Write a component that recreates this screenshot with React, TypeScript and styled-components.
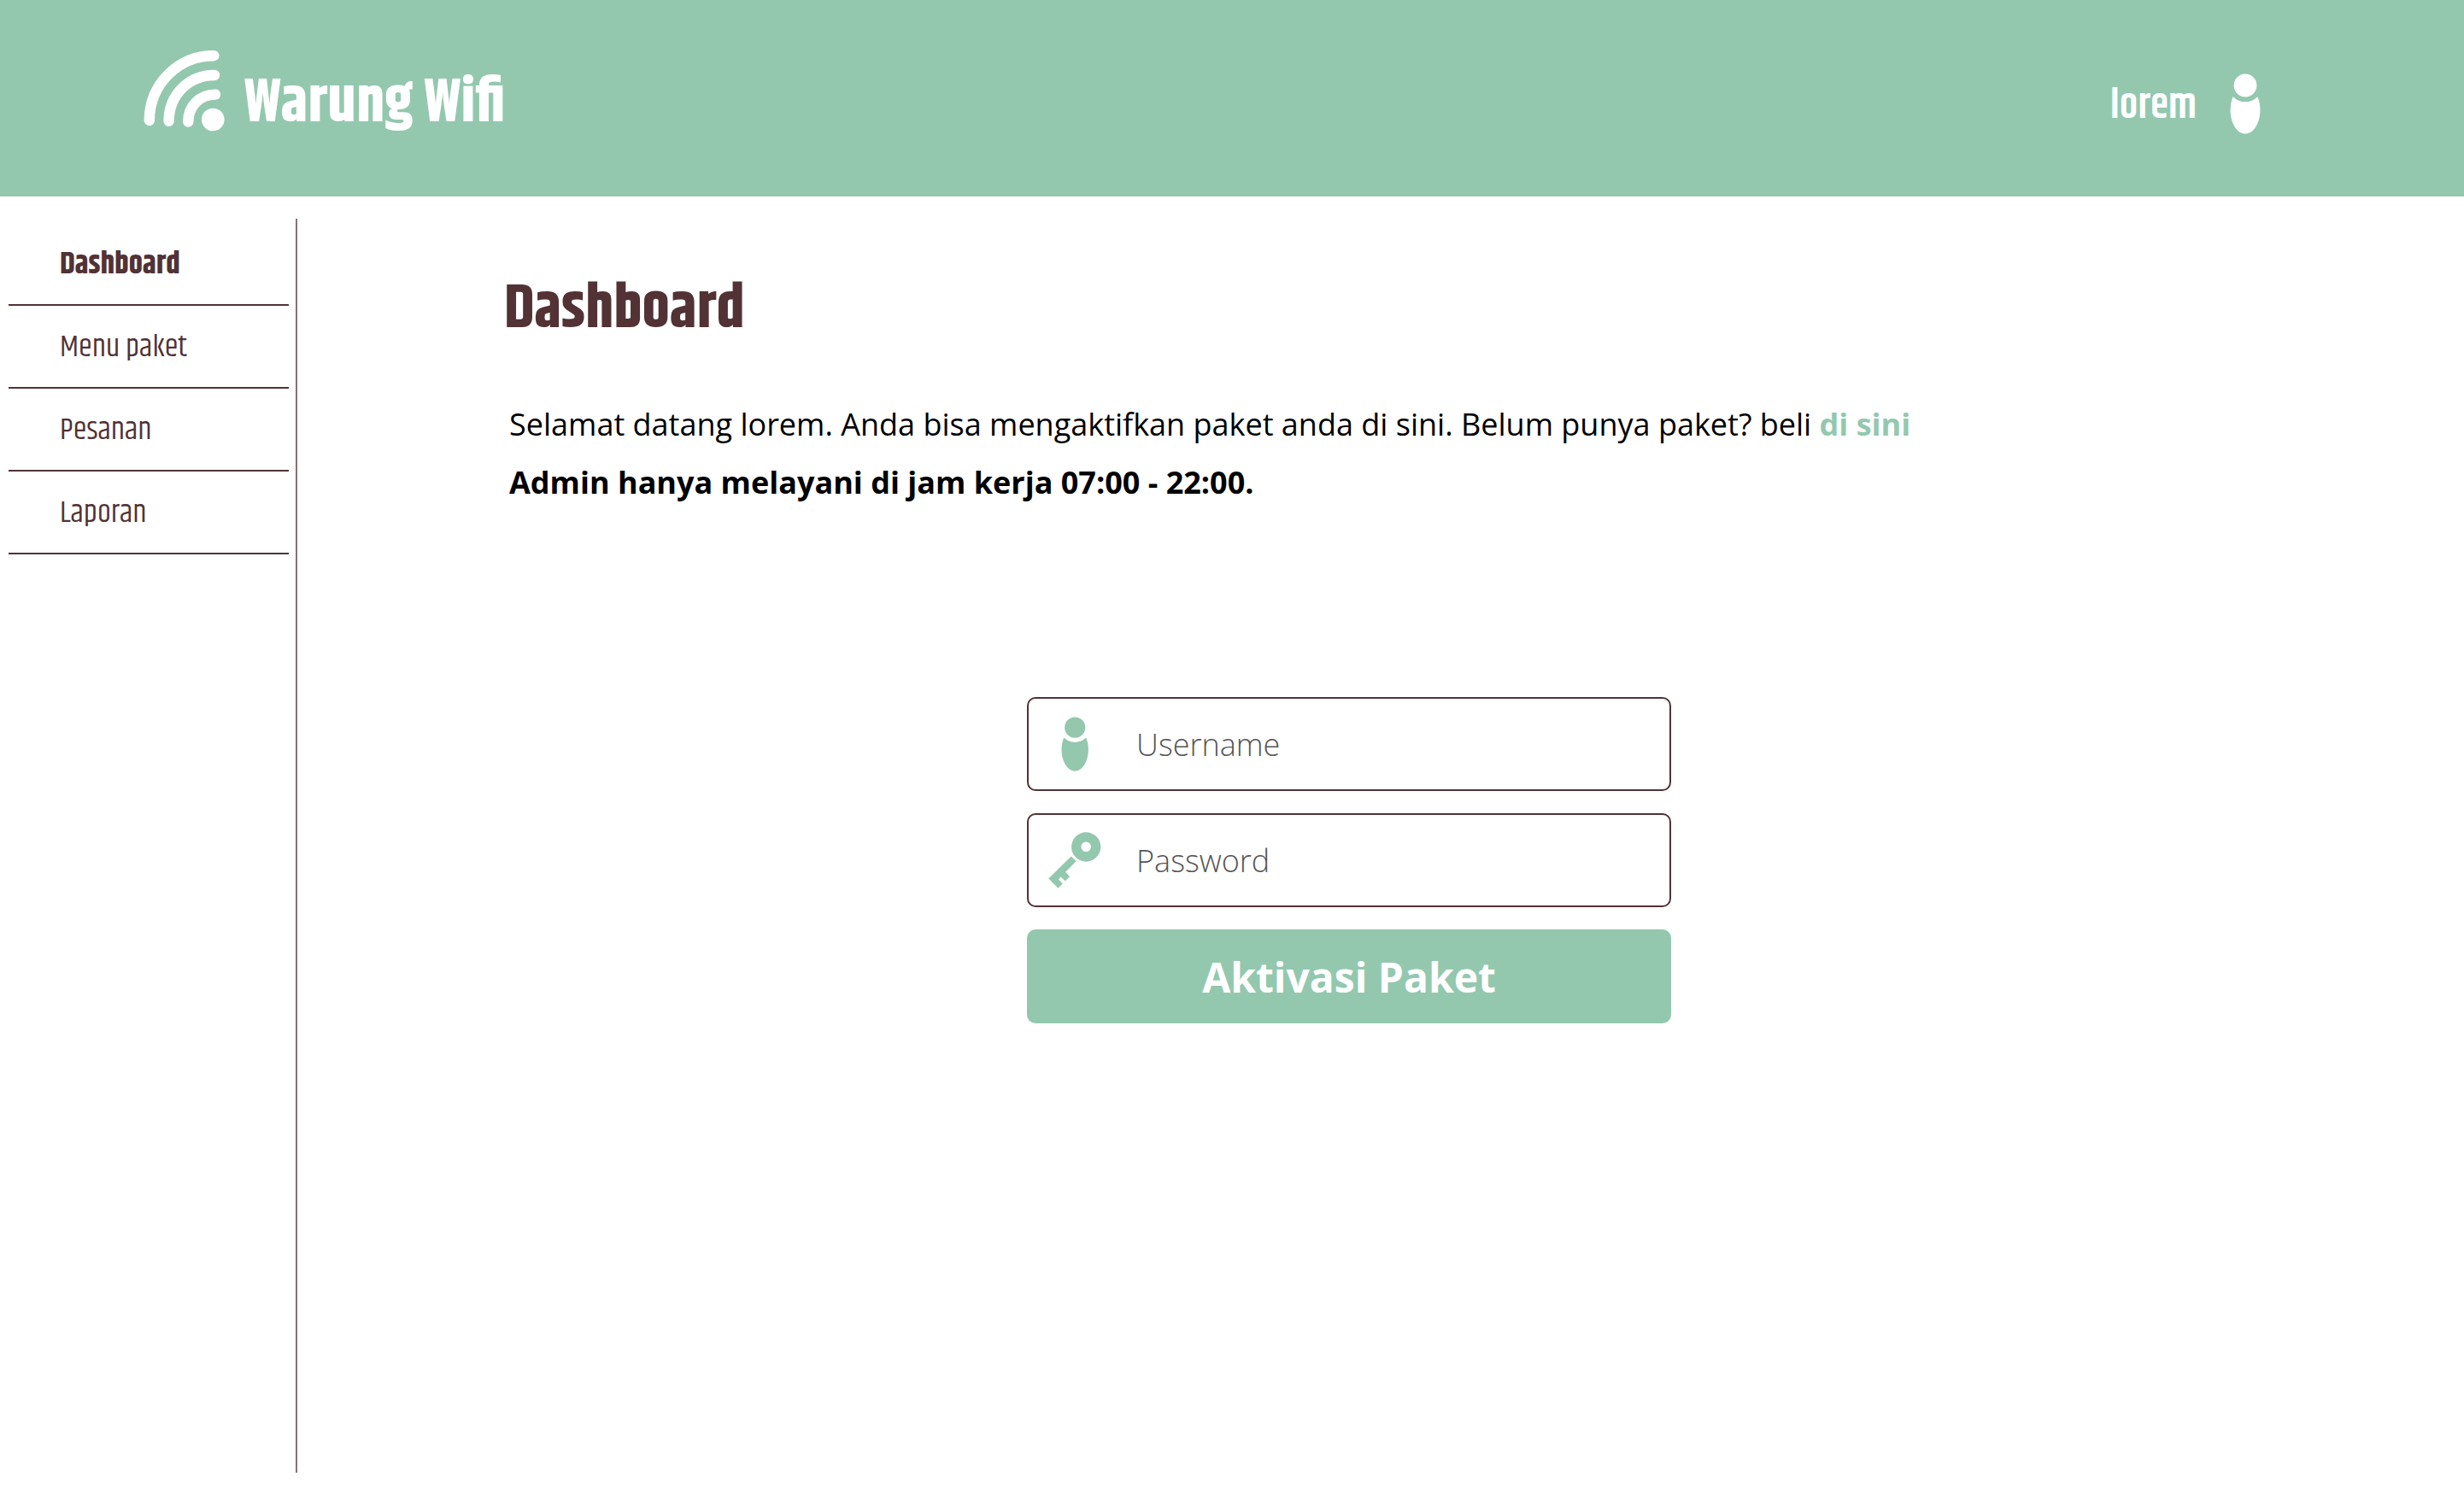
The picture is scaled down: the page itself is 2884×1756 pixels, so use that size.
import React from "react";
import styled, { createGlobalStyle } from "styled-components";

const green = "#93c8af";
const maroon = "#523235";
const condensed = `Khand, "Liberation Sans Narrow", "Liberation Sans", sans-serif`;

const GlobalStyle = createGlobalStyle`
  *, *::before, *::after { box-sizing: border-box; }
  body {
    margin: 0;
    background: #fff;
    color: #000;
    font-family: "Open Sans", sans-serif;
    font-size: 36px;
  }
`;

const Page = styled.div`
  min-height: 100vh;
  display: flex;
  flex-direction: column;
`;

const Header = styled.header`
  height: 230px;
  padding: 0 238px 73px 168px;
  display: flex;
  align-items: flex-end;
  justify-content: space-between;
  background: ${green};
  color: #fff;
  font-family: ${condensed};
`;

const Brand = styled.a`
  display: flex;
  align-items: flex-end;
  gap: 22px;
  color: inherit;
  text-decoration: none;
  font-size: 72px;
  font-weight: 700;
  line-height: 72px;
`;

const User = styled.a`
  display: flex;
  align-items: flex-end;
  gap: 39px;
  color: inherit;
  text-decoration: none;
  font-size: 48px;
  font-weight: 600;
  line-height: 64px;
`;

const Body = styled.div`
  flex: 1;
  display: flex;
  padding: 26px 0 32px;
`;

const Sidebar = styled.nav`
  flex: 0 0 348px;
  padding: 5px 8px 0 10px;
  border-right: 2px solid #877174;
`;

const MenuList = styled.ul`
  margin: 0;
  padding: 0;
  list-style: none;
`;

const MenuLink = styled.a<{ $active?: boolean }>`
  display: block;
  padding: 3px 0 0 60px;
  border-bottom: 2px solid ${maroon};
  color: ${maroon};
  font-family: ${condensed};
  font-size: 36px;
  font-weight: ${(p) => (p.$active ? 700 : 400)};
  line-height: 92px;
  text-decoration: none;
`;

const Main = styled.main`
  flex: 1;
  padding: 66px 316px 0 242px;
`;

const Title = styled.h1`
  margin: 0 0 60px;
  color: ${maroon};
  font-family: ${condensed};
  font-size: 72px;
  font-weight: 700;
  line-height: 81px;
`;

const Text = styled.p<{ $strong?: boolean }>`
  margin: 0;
  padding-left: 6px;
  font-weight: ${(p) => (p.$strong ? 700 : 400)};
  line-height: 68px;
`;

const BuyLink = styled.a`
  color: ${green};
  font-weight: 700;
  text-decoration: none;
`;

const Form = styled.form`
  max-width: 754px;
  margin: 217px auto 0;
  display: flex;
  flex-direction: column;
  gap: 26px;
`;

const Field = styled.label`
  height: 110px;
  padding: 0 24px;
  display: flex;
  align-items: center;
  gap: 42px;
  border: 2px solid ${maroon};
  border-radius: 10px;
  color: ${green};
`;

const IconSlot = styled.span`
  flex: 0 0 60px;
  min-width: 0;
  display: flex;
  justify-content: center;

  svg {
    flex-shrink: 0;
  }
`;

const Input = styled.input`
  flex: 1;
  min-width: 0;
  height: 100%;
  padding: 0;
  border: 0;
  outline: 0;
  background: transparent;
  color: #333;
  font: 300 36px "Open Sans", sans-serif;
  &::placeholder {
    color: #555;
    opacity: 1;
  }
`;

const Submit = styled.button`
  height: 110px;
  border: 0;
  border-radius: 10px;
  background: ${green};
  color: #fff;
  font: 700 48px "Open Sans", sans-serif;
  cursor: pointer;
`;

const WifiLogo = () => (
  <svg width="96" height="98" viewBox="18 19 96 98" fill="none" stroke="#fff" strokeWidth="12.4" strokeLinecap="round" aria-hidden="true">
    <path d="M100.3 25.2C58 25.2 25 59 24.8 101" />
    <path d="M101 48C71 48 47.600 71 47.600 101.800" />
    <path d="M102 70.600C84 70.600 70.300 84 70.300 102.600" />
    <circle cx="99.300" cy="100" r="13.300" fill="#fff" stroke="none" />
  </svg>
);

const PersonIcon = ({ height }: { height: number }) => (
  <svg height={height} viewBox="0 0 36 71" fill="currentColor" aria-hidden="true">
    <circle cx="18" cy="14" r="13.400" />
    <path d="M3.600 27.300A20.500 20.500 0 0 0 32.400 27.300C34.400 32 35.400 37 35.400 43C35.400 58 27.600 70.600 18 70.600S0.600 58 0.600 43C0.600 37 1.600 32 3.600 27.300Z" />
  </svg>
);

const KeyIcon = () => (
  <svg width="62" height="66" viewBox="114 516 186 200" fill="currentColor" aria-hidden="true">
    <path fillRule="evenodd" d="M247 517a52 52 0 1 0 0 104a52 52 0 1 0 0-104ZM247 551a17.500 17.500 0 1 1 0 35a17.500 17.500 0 1 1 0-35Z" />
    <path d="M194 602L212 620L174 658L189 674L173 690L158 675L149 684L164 699L148 715L114 681Z" />
  </svg>
);

const menu = ["Dashboard", "Menu paket", "Pesanan", "Laporan"];

export default function App() {
  return (
    <Page>
      <GlobalStyle />
      <Header>
        <Brand href="#">
          <WifiLogo />
          Warung Wifi
        </Brand>
        <User href="#">
          lorem
          <PersonIcon height={71} />
        </User>
      </Header>
      <Body>
        <Sidebar>
          <MenuList>
            {menu.map((item, i) => (
              <li key={item}>
                <MenuLink href="#" $active={i === 0}>
                  {item}
                </MenuLink>
              </li>
            ))}
          </MenuList>
        </Sidebar>
        <Main>
          <Title>Dashboard</Title>
          <Text>
            Selamat datang lorem. Anda bisa mengaktifkan paket anda di sini. Belum punya paket? beli{" "}
            <BuyLink href="#">di sini</BuyLink>
          </Text>
          <Text $strong>Admin hanya melayani di jam kerja 07:00 - 22:00.</Text>
          <Form onSubmit={(e) => e.preventDefault()}>
            <Field>
              <IconSlot>
                <PersonIcon height={64} />
              </IconSlot>
              <Input type="text" placeholder="Username" aria-label="Username" />
            </Field>
            <Field>
              <IconSlot>
                <KeyIcon />
              </IconSlot>
              <Input type="password" placeholder="Password" aria-label="Password" />
            </Field>
            <Submit type="submit">Aktivasi Paket</Submit>
          </Form>
        </Main>
      </Body>
    </Page>
  );
}
